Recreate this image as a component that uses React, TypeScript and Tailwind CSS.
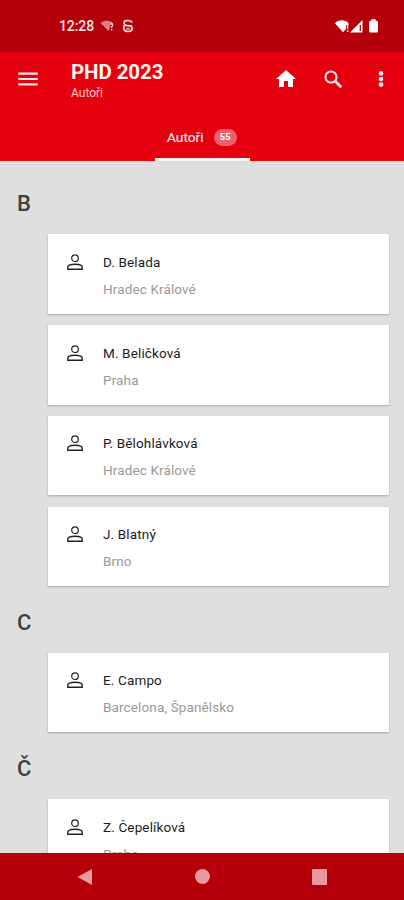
import { MdHome, MdMenu } from "react-icons/md";

type Author = {
  name: string;
  city: string;
};

type Section = {
  letter: string;
  authors: Author[];
};

const sections: Section[] = [
  {
    letter: "B",
    authors: [
      { name: "D. Belada", city: "Hradec Králové" },
      { name: "M. Beličková", city: "Praha" },
      { name: "P. Bělohlávková", city: "Hradec Králové" },
      { name: "J. Blatný", city: "Brno" },
    ],
  },
  { letter: "C", authors: [{ name: "E. Campo", city: "Barcelona, Španělsko" }] },
  { letter: "Č", authors: [{ name: "Z. Čepelíková", city: "Praha" }] },
];

const StatusBar = () => (
  <div className="flex h-[51.5px] shrink-0 items-center bg-[#b5000b] pl-[59px] pr-[26px] pt-px text-white">
    <span className="w-[36px] whitespace-nowrap text-[14px] font-medium leading-4 tracking-[-0.1px] text-[#ffe3e3]">12:28</span>
    <svg className="ml-[5px] h-[12px] w-[14px]" viewBox="0 0 14 12">
      <path d="M0.5 3C4 0 9 0 12 2.5V5H10V8L8.5 11Z" fill="#dc7f86" />
      <path d="M11 3.2q2 0.3 1.6 2.3l-1 1.3v1M11.6 9v1.5" fill="none" stroke="#ffe0e0" strokeWidth="1.3" />
    </svg>
    <svg className="ml-[8px] h-[14px] w-[12px]" viewBox="0 0 12 14" fill="none" stroke="#ffdcdc" strokeWidth="1.6">
      <path d="M10 3.6C9.5 0.8 2 0.5 2 4c0 2 1.6 2.6 4 2.6 3 0 4.2 1 4.2 3 0 3.9-8.4 3.9-8.4 0V7" />
      <path d="M1.5 6.6h8.5M4 9.8h4" strokeWidth="1.3" />
    </svg>
    <div className="ml-auto flex items-center">
      <svg className="h-[13px] w-[15px]" viewBox="0 0 15 13">
        <path d="M0 3.2C4-0.6 10-0.6 13.5 3.2V5H11V9L8 12.3Z" fill="#fff" />
        <path d="M12.6 4.5v4.5M12.6 10.3v1.7" stroke="#ffd9d9" strokeWidth="1.5" />
      </svg>
      <svg className="h-[13px] w-[13px]" viewBox="0 0 13 13">
        <path d="M12.5 0V12.5H0Z" fill="#fff" />
        <path d="M10.3 5v6" stroke="#b5000b" strokeWidth="1.3" />
      </svg>
      <svg className="ml-[6px] h-[14px] w-[9px]" viewBox="0 0 9 14">
        <path d="M2.5 0h4v1.3L9 2.8V12.3A1.2 1.2 0 0 1 7.8 13.5H1.2A1.2 1.2 0 0 1 0 12.3V2.8L2.5 1.3Z" fill="#fff" />
      </svg>
    </div>
  </div>
);

const AppBar = () => (
  <header className="flex h-[109.9px] shrink-0 flex-col bg-[#e5000f] text-white">
    <div className="flex h-[55px] items-center pl-[15px] pr-[20.5px]">
      <button type="button" aria-label="Menu" className="text-[#ffe9e9]">
        <MdMenu className="h-[26px] w-[26px]" />
      </button>
      <div className="ml-[30px] pt-[3px]">
        <h1 className="text-[20.5px] font-bold leading-[24px] tracking-[-0.1px] text-[#fff0f0]">PHD 2023</h1>
        <p className="text-[12px] leading-[18px] text-[#ffc9cb]">Autoři</p>
      </div>
      <div className="ml-auto flex items-center">
        <MdHome className="h-6 w-6" />
        <svg className="ml-[26px] h-[18.5px] w-[18.5px]" viewBox="0 0 18 18" fill="none" stroke="#ffe9e9">
          <circle cx="6.8" cy="6.8" r="5.4" strokeWidth="2" />
          <path d="M10.8 10.8L16.8 16.8" strokeWidth="2.7" />
        </svg>
        <svg className="ml-[35px] h-4 w-[6px]" viewBox="0 0 6 16" fill="#fff0f0">
          <circle cx="3" cy="2.4" r="2.3" />
          <circle cx="3" cy="8" r="2.3" />
          <circle cx="3" cy="13.6" r="2.3" />
        </svg>
      </div>
    </div>
    <div className="flex grow justify-center">
      <div className="flex w-[95px] items-center justify-center border-b-[3px] border-[#fff0f0] pt-[10px]">
        <span className="text-[13.7px] leading-4 text-[#ffe9e9] [-webkit-text-stroke:0.2px]">Autoři</span>
        <span className="ml-[10px] flex h-[17px] w-[23.5px] items-center justify-center rounded-full bg-[#f0606a] text-[9.5px] font-bold text-white">
          55
        </span>
      </div>
    </div>
  </header>
);

const PersonIcon = () => (
  <svg className="ml-[4px] mt-[4.5px] h-4 w-4 shrink-0" viewBox="0 0 16 16" fill="none" stroke="#222">
    <circle cx="8" cy="4.2" r="3.3" strokeWidth="1.2" />
    <path d="M0.8 15.2V13.2C0.8 11.2 3.5 10.2 8 10.2S15.2 11.2 15.2 13.2V15.2Z" strokeWidth="1.4" />
  </svg>
);

const AuthorCard = ({ name, city }: Author) => (
  <li className="flex h-[79.6px] bg-white pl-[15px] pt-[15px] shadow-[0_1px_2px_rgba(0,0,0,0.25)]">
    <PersonIcon />
    <div className="ml-5 pt-[2.5px]">
      <div className="text-[13.5px] leading-[20px] tracking-[0.14px] text-[#1c1c1c]">{name}</div>
      <div className="mt-[7px] text-[13.5px] leading-[20px] tracking-[0.13px] text-[#999]">{city}</div>
    </div>
  </li>
);

const NavigationBar = () => (
  <nav className="flex h-[47px] shrink-0 items-center justify-between bg-[#b5000b] px-[77px] text-[#e69aa0]">
    <svg className="h-4 w-[15px]" viewBox="0 0 15 16" fill="currentColor">
      <path d="M15 0V16L0.5 8Z" />
    </svg>
    <div className="ml-px h-[15px] w-[15px] rounded-full bg-[#e69aa0]" />
    <div className="h-4 w-[15.5px] rounded-[1px] bg-[#e69aa0]" />
  </nav>
);

export default function App() {
  return (
    <div className="flex h-[900px] w-[404px] flex-col overflow-hidden bg-[#dfdfdf] font-[Roboto,sans-serif]">
      <StatusBar />
      <AppBar />
      <main className="min-h-0 grow overflow-hidden pt-[6.2px]">
        {sections.map((section) => (
          <section key={section.letter}>
            <h2 className="flex h-[66.7px] items-center pl-[17px] pt-[5px] text-[22px] font-medium text-[#404040]">
              {section.letter}
            </h2>
            <ul className="ml-[48px] mr-[15px] flex flex-col gap-[11.2px]">
              {section.authors.map((author) => (
                <AuthorCard key={author.name} {...author} />
              ))}
            </ul>
          </section>
        ))}
      </main>
      <NavigationBar />
    </div>
  );
}
